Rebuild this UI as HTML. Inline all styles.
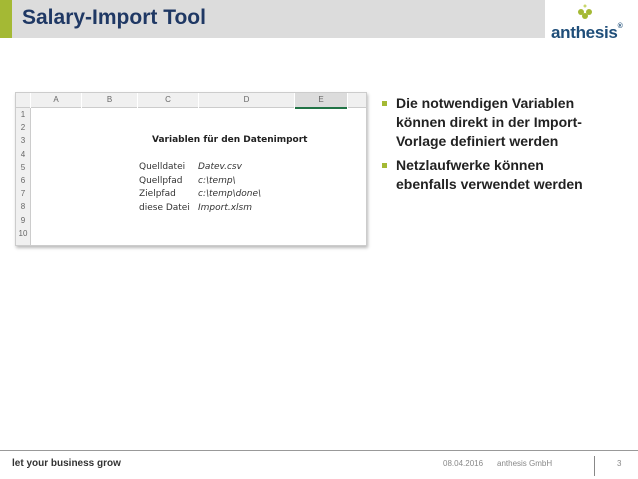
<!DOCTYPE html>
<html><head><style>
body{margin:0;width:638px;height:479px;background:#fff;position:relative;font-family:"Liberation Sans",sans-serif;overflow:hidden}
.hdr{position:absolute;left:0;top:0;width:545px;height:38px;background:#dcdcdc}
.grn{position:absolute;left:0;top:0;width:12px;height:38px;background:#a4b934}
.title{position:absolute;left:22px;top:6px;font-size:21px;font-weight:bold;color:#1f3864}
.logo{position:absolute;left:551px;top:23px;font-size:17px;font-weight:bold;color:#1f4e79;letter-spacing:-.3px}
.sheet{position:absolute;left:15px;top:92px;width:350px;height:152px;border:1px solid #ccc;box-shadow:1px 2px 3px #bbb;background:#fff;font-size:9px;color:#444}
.ch{position:absolute;top:0;height:14px;background:#f0f0f0;border-bottom:1px solid #ccc;text-align:center;line-height:14px;font-size:8px;color:#666}
.rn{position:absolute;left:0;width:14px;background:#f0f0f0;border-right:1px solid #ccc;font-size:8px;color:#666;text-align:center}
.c{position:absolute;font-family:"DejaVu Sans",sans-serif;font-size:9px;color:#222}
ul{position:absolute;left:380px;top:94px;margin:0;padding:0;list-style:none;font-size:14px;font-weight:bold;color:#222;line-height:19px;width:250px}
li{position:relative;padding-left:16px;margin-bottom:5px}
li:before{content:"";position:absolute;left:2px;top:7px;width:5px;height:5px;background:#a4b934}
.fl{position:absolute;left:0;top:450px;width:638px;height:1px;background:#999}
.ft{position:absolute;top:459px;font-size:8px;color:#888}
</style></head><body>
<div class="hdr"></div><div class="grn"></div>
<div class="title">Salary-Import Tool</div>
<svg style="position:absolute;left:575px;top:3px" width="20" height="18"><circle cx="10" cy="3" r="1.5" fill="#c8d66a"/><circle cx="6" cy="9" r="3" fill="#a4b934"/><circle cx="14" cy="9" r="3" fill="#a4b934"/><circle cx="10" cy="13" r="3" fill="#a4b934"/></svg>
<div class="logo">anthesis<span style="font-size:7px;vertical-align:top">®</span></div>
<div class="sheet">
<div class="ch" style="left:0;width:14px"></div>
<div class="ch" style="left:15px;width:50px">A</div>
<div class="ch" style="left:66px;width:55px">B</div>
<div class="ch" style="left:122px;width:60px">C</div>
<div class="ch" style="left:183px;width:95px">D</div>
<div class="ch" style="left:279px;width:52px;background:#dcdcdc;border-bottom:2px solid #217346">E</div>
<div class="ch" style="left:332px;width:18px"></div>
<div class="rn" style="top:15px;height:137px;line-height:13.2px">1<br>2<br>3<br>4<br>5<br>6<br>7<br>8<br>9<br>10</div>
<div class="c" style="left:136px;top:42px;font-weight:bold">Variablen für den Datenimport</div>
<div class="c" style="left:123px;top:68px;line-height:13.7px;color:#333">Quelldatei<br>Quellpfad<br>Zielpfad<br>diese Datei</div>
<div class="c" style="left:182px;top:68px;line-height:13.7px;font-style:italic;color:#333">Datev.csv<br>c:\temp\<br>c:\temp\done\<br>Import.xlsm</div>
</div>
<ul><li>Die notwendigen Variablen<br>können direkt in der Import-<br>Vorlage definiert werden</li><li>Netzlaufwerke können<br>ebenfalls verwendet werden</li></ul>
<div class="fl"></div>
<div class="ft" style="left:12px;top:458px;font-size:10px;font-weight:bold;color:#333">let your business grow</div>
<div class="ft" style="left:443px">08.04.2016</div>
<div class="ft" style="left:497px">anthesis GmbH</div>
<div style="position:absolute;left:594px;top:456px;width:1px;height:20px;background:#888"></div>
<div class="ft" style="left:617px">3</div>
</body></html>
